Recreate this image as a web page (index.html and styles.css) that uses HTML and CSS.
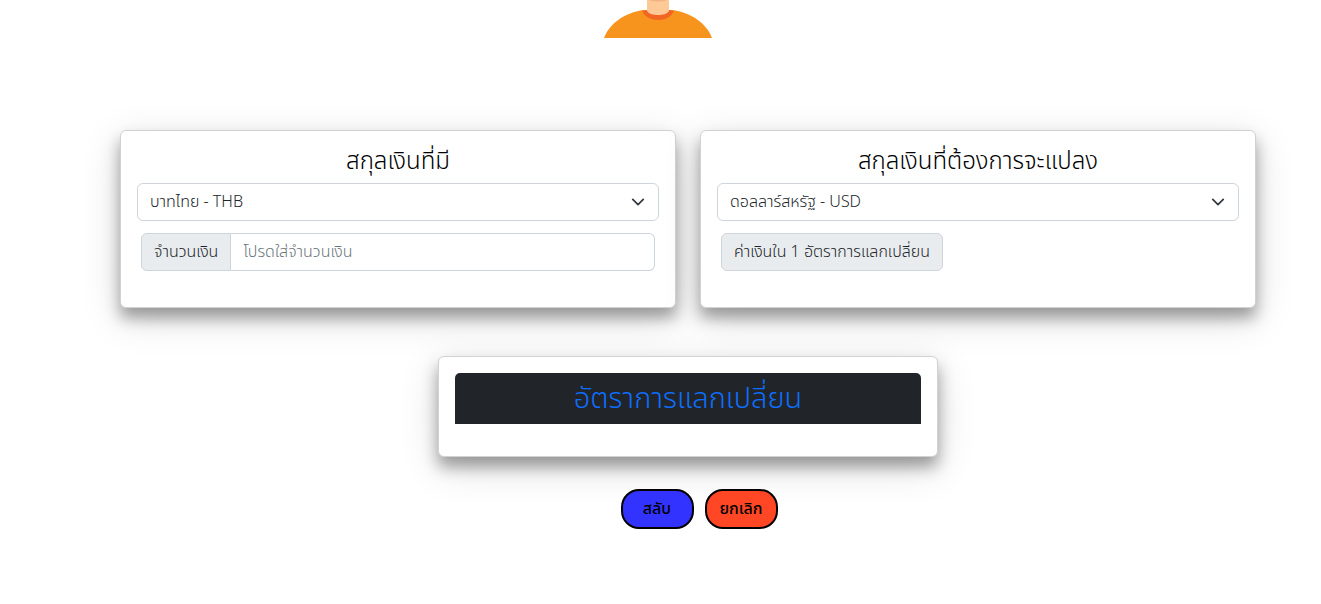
FILE: index.html
```html
<!DOCTYPE html>
<html lang="th">
<head>
<meta charset="utf-8">
<meta name="viewport" content="width=device-width, initial-scale=1">
<title>อัตราการแลกเปลี่ยน</title>
<link rel="stylesheet" href="styles.css">
</head>
<body>
<header class="hero">
  <svg class="avatar" width="108" height="38" viewBox="0 0 108 38" aria-hidden="true">
    <path d="M0 38C5 24 20 13 39 10H69C88 13 103 24 108 38Z" fill="#f7941d"/>
    <path d="M38 11L43 10H65L70 11C67 17 61 20 54 20S41 17 38 11Z" fill="#f26522"/>
    <path d="M43 0H65V11C63 14 59 15 54 15S45 14 43 11Z" fill="#fdc997"/>
    <path d="M45 0H63C58 2 50 2 45 0Z" fill="#f3b382"/>
  </svg>
</header>
<main class="page">
  <div class="row">
    <section class="card">
      <h2 class="card-title"><label for="from">สกุลเงินที่มี</label></h2>
      <div class="select-wrap">
        <select class="select" id="from"><option>บาทไทย - THB</option></select>
        <svg class="chevron" width="16" height="16" viewBox="0 0 16 16" aria-hidden="true"><path d="m2 5 6 6 6-6"/></svg>
      </div>
      <div class="group">
        <label class="addon" for="amount">จำนวนเงิน</label>
        <input class="input" id="amount" type="text" placeholder="โปรดใส่จำนวนเงิน">
      </div>
    </section>
    <section class="card">
      <h2 class="card-title"><label for="to">สกุลเงินที่ต้องการจะแปลง</label></h2>
      <div class="select-wrap">
        <select class="select" id="to"><option>ดอลลาร์สหรัฐ - USD</option></select>
        <svg class="chevron" width="16" height="16" viewBox="0 0 16 16" aria-hidden="true"><path d="m2 5 6 6 6-6"/></svg>
      </div>
      <div class="group">
        <span class="addon addon-only">ค่าเงินใน 1 อัตราการแลกเปลี่ยน</span>
      </div>
    </section>
  </div>
  <section class="card result">
    <h1 class="result-title">อัตราการแลกเปลี่ยน</h1>
  </section>
  <div class="actions">
    <button class="btn btn-swap" type="button">สลับ</button>
    <button class="btn btn-cancel" type="button">ยกเลิก</button>
  </div>
</main>
</body>
</html>
```
FILE: styles.css
```css
*, *::before, *::after { box-sizing: border-box; }
body {
  margin: 0;
  background: #fff;
  color: #212529;
  font-family: "Noto Sans Thai", Inter, "Open Sans", sans-serif;
  font-size: 16px;
  font-weight: 300;
  line-height: 24px;
}
.hero { display: flex; justify-content: center; padding-right: 5px; }
.avatar { display: block; }
.page { padding: 92px 65px 72px 120px; }
.row { display: grid; grid-template-columns: 1fr 1fr; gap: 24px; }
.card {
  background: #fff;
  border: 1px solid #d0d2d3;
  border-radius: 6px;
  padding: 16px 16px 36px;
  box-shadow: 0 10px 15px rgba(0, 0, 0, .34), 0 10px 40px rgba(0, 0, 0, .14);
}
.card-title {
  margin: 0 0 6px;
  color: #000;
  font-size: 24px;
  font-weight: 300;
  line-height: 30px;
  text-align: center;
}
.select-wrap { display: grid; align-items: center; }
.select, .chevron { grid-area: 1 / 1; }
.select {
  appearance: none;
  width: 100%;
  height: 38px;
  padding: 0 36px 0 12px;
  border: 1px solid #ced4da;
  border-radius: 6px;
  background: #fff;
  color: #212529;
  font: inherit;
}
.chevron {
  justify-self: end;
  width: 14px;
  height: 14px;
  margin-right: 14px;
  fill: none;
  stroke: #343a40;
  stroke-width: 2;
  stroke-linecap: round;
  stroke-linejoin: round;
  pointer-events: none;
}
.group { display: flex; margin: 12px 4px 0; }
.addon {
  height: 38px;
  padding: 6px 12px;
  border: 1px solid #ced4da;
  border-radius: 6px 0 0 6px;
  background: #e9ecef;
  white-space: nowrap;
}
.addon-only { border-radius: 6px; }
.input {
  flex: 1;
  min-width: 0;
  height: 38px;
  padding: 0 12px;
  border: 1px solid #ced4da;
  border-left: 0;
  border-radius: 0 6px 6px 0;
  background: #fff;
  font: inherit;
}
.input::placeholder { color: #6c757d; opacity: 1; }
.result { width: 44%; margin: 48px auto 0; padding-bottom: 32px; }
.result-title {
  margin: 0;
  padding: 9px 8px 8px;
  border-radius: 5px 5px 0 0;
  background: #212529;
  color: #0d6efd;
  font-size: 29px;
  font-weight: 300;
  line-height: 34px;
  text-align: center;
}
.actions { display: flex; justify-content: center; gap: 11px; margin-top: 32px; padding-left: 22px; }
.btn {
  width: 73px;
  height: 40px;
  padding: 0;
  border: 2px solid #000;
  border-radius: 18px;
  color: #000;
  font: inherit;
  font-weight: 500;
}
.btn-swap { background: #33f; }
.btn-cancel { background: #ff4726; }
```
